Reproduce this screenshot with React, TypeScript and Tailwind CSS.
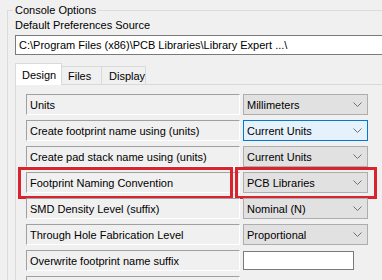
import React from 'react';

interface Row {
  label: string;
  value?: string;
  focused?: boolean;
  marked?: boolean;
  input?: boolean;
}

const rows: Row[] = [
  { label: 'Units', value: 'Millimeters' },
  { label: 'Create footprint name using (units)', value: 'Current Units', focused: true },
  { label: 'Create pad stack name using (units)', value: 'Current Units' },
  { label: 'Footprint Naming Convention', value: 'PCB Libraries', marked: true },
  { label: 'SMD Density Level (suffix)', value: 'Nominal (N)' },
  { label: 'Through Hole Fabrication Level', value: 'Proportional' },
  { label: 'Overwrite footprint name suffix', input: true },
  { label: '' },
];

const Chevron = () => (
  <svg width="9" height="5" viewBox="0 0 9 5" className="shrink-0">
    <polyline points="0.5,0.5 4.5,4.5 8.5,0.5" fill="none" stroke="#707070" strokeWidth="1" />
  </svg>
);

const Combo = ({ value, focused }: { value: string; focused?: boolean }) => (
  <div
    className={`ml-[3px] w-[125px] h-[21px] flex items-center justify-between pl-[3px] pr-[5px] border ${
      focused ? 'border-[#0078d7] bg-[#e5f1fb]' : 'border-[#adadad] bg-[#e1e1e1]'
    }`}
  >
    <span>{value}</span>
    <Chevron />
  </div>
);

const OptionRow = ({ row }: { row: Row }) => (
  <div className="relative flex h-[21px] shrink-0">
    <div className="w-[214px] h-[21px] flex items-center pl-[3px] border border-t-[#a0a0a0] border-l-[#a0a0a0] border-b-white border-r-white whitespace-nowrap overflow-hidden">
      {row.label}
    </div>
    {row.value && <Combo value={row.value} focused={row.focused} />}
    {row.input && <div className="ml-[3px] mt-px w-[111px] h-[19px] border border-[#7a7a7a] bg-white" />}
    {row.marked && (
      <>
        <div className="absolute left-[-8px] top-[-5px] w-[215px] h-[32px] border-[3px] border-[#d9232d]" />
        <div className="absolute left-[209px] top-[-5px] w-[142px] h-[32px] border-[3px] border-[#d9232d]" />
      </>
    )}
  </div>
);

export default function App() {
  return (
    <div
      className="w-[382px] h-[280px] overflow-hidden bg-[#f0f0f0] text-[11px] leading-[14px] text-black"
      style={{ fontFamily: '"Liberation Sans", Arial, sans-serif' }}
    >
      <div className="pt-[10px] pl-[7px]">
        <div className="relative border-t border-l border-[#dcdcdc] pl-[7px] h-[300px]">
          <span className="absolute left-[5px] top-[-8px] px-[2px] bg-[#f0f0f0]">Console Options</span>
          <p className="mt-[7px]">Default Preferences Source</p>
          <div className="mt-[3px] w-[372px] h-[20px] flex items-center pl-[3px] border border-[#7a7a7a] bg-white whitespace-nowrap">
            C:\Program Files (x86)\PCB Libraries\Library Expert ...\
          </div>

          <div className="mt-[8px] flex items-end h-[21px]">
            <div className="relative z-10 -mb-px h-[22px] w-[47px] pl-[6px] pt-[4px] bg-white border-t border-l border-r border-[#d9d9d9]">
              Design
            </div>
            <div className="h-[18px] w-[40px] pl-[6px] pt-[2px] border-t border-r border-[#d9d9d9]">Files</div>
            <div className="h-[18px] w-[44px] pl-[7px] pt-[2px] border-t border-r border-[#d9d9d9]">Display</div>
          </div>

          <div className="border-t border-l border-[#d9d9d9] pt-[9px] pl-[10px] flex flex-col gap-[5px]">
            {rows.map((row, i) => (
              <OptionRow key={i} row={row} />
            ))}
          </div>
        </div>
      </div>
    </div>
  );
}
